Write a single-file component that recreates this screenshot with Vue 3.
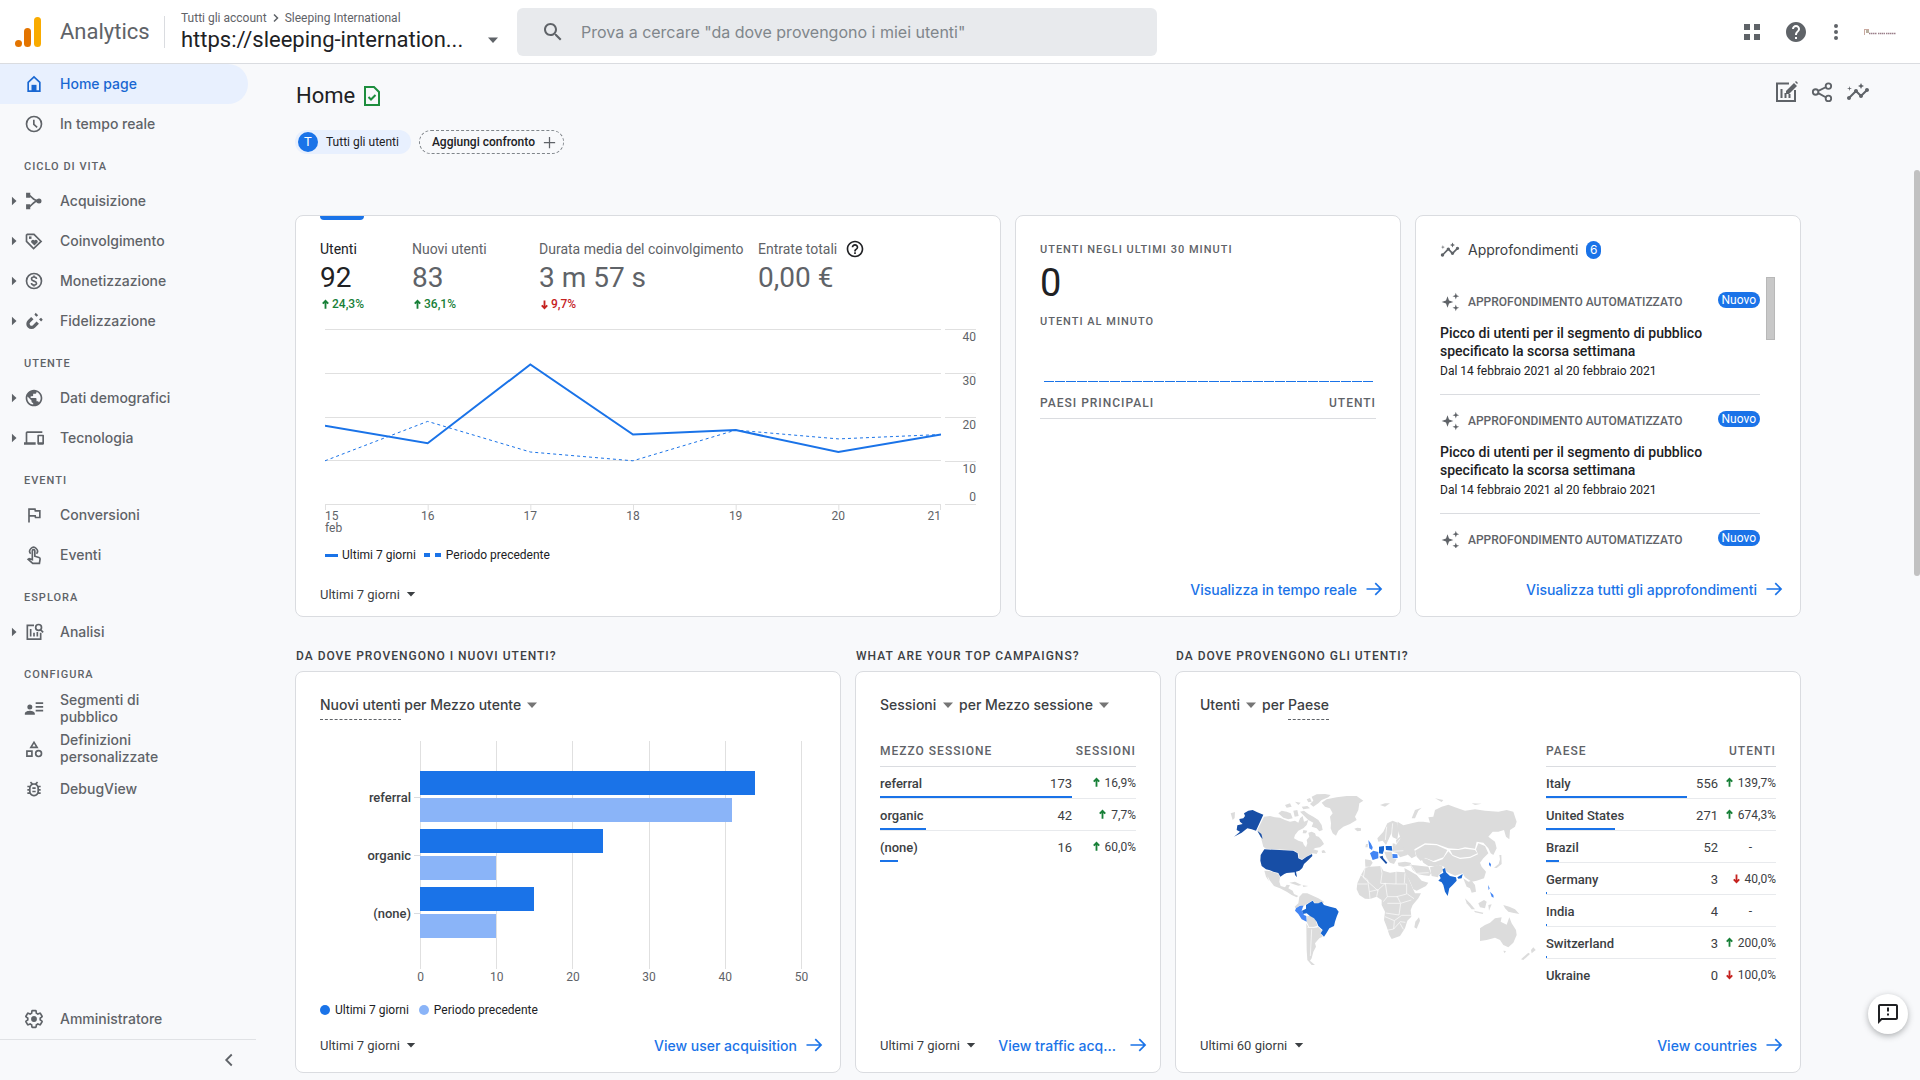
<script setup>
import { h } from 'vue'

/* Each icon is a list of [path data, stroke width]; a width of 0 means a filled path. */
const icons = {
  home: [['M5 10v10.5h14V10l-7-6.5z', 2], ['M9 13h6v8H9z', 0]],
  clock: [['M12 3a9 9 0 1 0 0 18a9 9 0 1 0 0-18M11.800 7v5.500l4 3.500', 2]],
  acquisition: [['M2.500 2h5v6h-5zM2.500 16h5v6h-5zM18 9a3 3 0 1 0 0 6a3 3 0 1 0 0-6', 0], ['M5 5c6 1 4 7 13 7M5 19c6-1 4-7 13-7', 2]],
  tag: [['M3 5v7.500l8.500 8.500 9-8.500L12 4H4z', 2], ['M6 6.500h3v3H6z', 0], ['M12.500 17.500l-4-4a2.300 2.300 0 0 1 4-2 2.300 2.300 0 0 1 4 2z', 0]],
  money: [['M12 3a9 9 0 1 0 0 18a9 9 0 1 0 0-18', 2], ['M15 9.500c0-3.200-6-3-6 0 0 3.500 6 1.800 6 5.200 0 3-6 3-6-.2M12 5.500v2M12 16.500v2', 2]],
  magnet: [['M10 8.500L6 12.500a4 4 0 0 0 6 6l4.500-4.500', 4], ['M14 2l3 3-2 2-2.500-2.500zM20.500 8l2 2.500-2 2-2.500-2.500z', 0]],
  globe: [['M12 2C6.480 2 2 6.480 2 12s4.480 10 10 10 10-4.480 10-10S17.520 2 12 2zm-1 17.930c-3.950-.49-7-3.850-7-7.930 0-.62.08-1.210.21-1.790L9 15v1c0 1.100.9 2 2 2v1.930zm6.900-2.540c-.26-.81-1-1.390-1.900-1.390h-1v-3c0-.55-.45-1-1-1H8v-2h2c.55 0 1-.45 1-1V7h2c1.100 0 2-.9 2-2v-.41c2.930 1.190 5 4.060 5 7.410 0 2.080-.8 3.970-2.100 5.390z', 0]],
  devices: [['M4 6h18V4H4c-1.100 0-2 .9-2 2v11H0v3h14v-3H4V6zm19 2h-6c-.55 0-1 .45-1 1v10c0 .55.45 1 1 1h6c.55 0 1-.45 1-1V9c0-.55-.45-1-1-1zm-1 9h-4v-7h4v7z', 0]],
  flag: [['M12.360 6l.4 2H18v6h-3.360l-.4-2H7V6h5.360M14 4H5v17h2v-7h5.600l.4 2h7V6h-5.600L14 4z', 0]],
  touch: [['M10 17.500V7a1.500 1.500 0 0 1 3 0v6.500l5 1.500c1 .3 1.500 1 1.300 2l-.8 5H10.500L5 17.300l1.200-.8z', 2], ['M8 10.500a4.600 4.600 0 1 1 7 0', 2]],
  analysis: [['M12 4H4v16.500h16V13', 2], ['M8 8.500v9M12 13v4.500M16 12v5.500', 2], ['M17.500 3a3.500 3.500 0 1 0 0 7a3.500 3.500 0 1 0 0-7M20 9.500l3 3', 2]],
  people: [['M7 6.500a3 3 0 1 0 0 6a3 3 0 1 0 0-6M1 19v-1.500c0-2.500 4-3.500 6-3.500s6 1 6 3.500V19zM14 4h9v2h-9zM14 8.500h9v2h-9zM14 13h9v2h-9z', 0]],
  shapes: [['M12 2l-5.500 9h11L12 2zm0 3.840L13.930 9h-3.870L12 5.840zM17.500 13a4.500 4.500 0 1 0 0 9 4.500 4.500 0 1 0 0-9zm0 7a2.500 2.500 0 0 1 0-5 2.500 2.500 0 0 1 0 5zM2.500 21.500h8v-8h-8v8zm2-6h4v4h-4v-4z', 0]],
  bug: [['M20 8h-2.810c-.45-.78-1.070-1.450-1.820-1.960L17 4.410 15.590 3l-2.170 2.170C12.960 5.060 12.490 5 12 5s-.96.06-1.410.17L8.410 3 7 4.410l1.620 1.630C7.880 6.550 7.260 7.220 6.810 8H4v2h2.090c-.05.33-.09.66-.09 1v1H4v2h2v1c0 .34.04.67.09 1H4v2h2.810c1.040 1.790 2.970 3 5.190 3s4.150-1.210 5.190-3H20v-2h-2.090c.05-.33.09-.66.09-1v-1h2v-2h-2v-1c0-.34-.04-.67-.09-1H20V8zm-4 7c0 2.200-1.800 4-4 4s-4-1.800-4-4v-4c0-2.200 1.800-4 4-4s4 1.800 4 4v4zm-6-1h4v2h-4v-2zm0-4h4v2h-4v-2z', 0]],
  gear: [['M19.430 12.980c.04-.32.07-.64.07-.98s-.03-.66-.07-.98l2.110-1.650c.19-.15.24-.42.12-.64l-2-3.460c-.09-.16-.26-.25-.44-.25-.06 0-.12.01-.17.03l-2.490 1c-.52-.4-1.080-.73-1.690-.98l-.38-2.650C14.460 2.180 14.250 2 14 2h-4c-.25 0-.46.18-.49.42l-.38 2.650c-.61.25-1.170.59-1.690.98l-2.490-1c-.06-.02-.12-.03-.18-.03-.17 0-.34.09-.43.25l-2 3.460c-.13.22-.07.49.12.64l2.110 1.650c-.04.32-.07.65-.07.98s.03.66.07.98l-2.110 1.650c-.19.15-.24.42-.12.64l2 3.460c.09.16.26.25.44.25.06 0 .12-.01.17-.03l2.490-1c.52.4 1.080.73 1.690.98l.38 2.650c.03.24.24.42.49.42h4c.25 0 .46-.18.49-.42l.38-2.650c.61-.25 1.170-.59 1.690-.98l2.490 1c.06.02.12.03.18.03.17 0 .34-.09.43-.25l2-3.460c.12-.22.07-.49-.12-.64z', 2], ['M12 8.500a3.500 3.500 0 1 0 0 7a3.500 3.500 0 1 0 0-7', 0]],
  chevronLeft: [['M15 6l-6 6 6 6', 2]],
  search: [['M15.500 14h-.79l-.28-.27C15.410 12.590 16 11.110 16 9.500 16 5.910 13.090 3 9.500 3S3 5.910 3 9.500 5.910 16 9.500 16c1.610 0 3.090-.59 4.230-1.570l.27.28v.79l5 4.990L20.490 19l-4.990-5zm-6 0C7.010 14 5 11.990 5 9.500S7.010 5 9.500 5 14 7.010 14 9.500 11.990 14 9.500 14z', 0]],
  apps: [['M4 4h6v6H4zM14 4h6v6h-6zM4 14h6v6H4zM14 14h6v6h-6z', 0]],
  help: [['M12 2C6.480 2 2 6.480 2 12s4.480 10 10 10 10-4.480 10-10S17.520 2 12 2zm1 17h-2v-2h2v2zm2.070-7.750l-.9.92C13.450 12.900 13 13.500 13 15h-2v-.5c0-1.100.45-2.100 1.170-2.830l1.240-1.260c.37-.36.59-.86.59-1.410 0-1.100-.9-2-2-2s-2 .9-2 2H8c0-2.210 1.790-4 4-4s4 1.790 4 4c0 .88-.36 1.680-.93 2.250z', 0]],
  helpOutline: [['M11 18h2v-2h-2v2zm1-16C6.480 2 2 6.480 2 12s4.480 10 10 10 10-4.480 10-10S17.520 2 12 2zm0 18c-4.410 0-8-3.590-8-8s3.590-8 8-8 8 3.590 8 8-3.590 8-8 8zm0-14c-2.210 0-4 1.790-4 4h2c0-1.100.9-2 2-2s2 .9 2 2c0 2-3 1.750-3 5h2c0-2.250 3-2.500 3-5 0-2.210-1.790-4-4-4z', 0]],
  more: [['M12 4a2 2 0 1 0 0 4a2 2 0 1 0 0-4M12 10a2 2 0 1 0 0 4a2 2 0 1 0 0-4M12 16a2 2 0 1 0 0 4a2 2 0 1 0 0-4', 0]],
  editChart: [['M15 3.500H3v17.500h18V10', 2], ['M7.500 9v9M11.500 13v5M15.500 14v4', 2], ['M12 14v-3l8-8 3 3-8 8zM21 2l1-1 2 2-1 1z', 0]],
  share: [['M19 2.500a3 3 0 1 0 0 6a3 3 0 1 0 0-6M5 9a3 3 0 1 0 0 6a3 3 0 1 0 0-6M19 16a3 3 0 1 0 0 6a3 3 0 1 0 0-6M8 10.800l8-4M8 13.200l8 4.500', 2]],
  insights: [['M21 8c-1.450 0-2.260 1.440-1.930 2.510l-3.550 3.560c-.3-.09-.74-.09-1.040 0l-2.550-2.550C12.270 10.450 11.460 9 10 9c-1.450 0-2.270 1.440-1.930 2.520l-4.560 4.550C2.440 15.740 1 16.550 1 18c0 1.100.9 2 2 2 1.450 0 2.260-1.440 1.930-2.510l4.550-4.560c.3.09.74.09 1.040 0l2.550 2.550C12.730 16.550 13.540 18 15 18c1.450 0 2.270-1.440 1.930-2.520l3.560-3.550C21.560 12.260 23 11.450 23 10c0-1.100-.9-2-2-2zM15 9l.94-2.070L18 6l-2.060-.93L15 3l-.92 2.070L12 6l2.080.93zM3.500 11L4 9l2-.5L4 8l-.5-2L3 8l-2 .5L3 9z', 0]],
  sparkles: [['M9 5l1.800 5.200L16 12l-5.200 1.800L9 19l-1.800-5.200L2 12l5.200-1.800zM19 1l1 3 3 1-3 1-1 3-1-3-3-1 3-1zM19 15l1 3 3 1-3 1-1 3-1-3-3-1 3-1z', 0]],
  report: [['M14 3H5v18h14V8z', 2], ['M8.500 13l2.500 2.500 4.500-4.500', 2]],
  plus: [['M12 3v18M3 12h18', 2]],
  arrow: [['M3 12h17M13.500 5l7 7-7 7', 2]],
  up: [['M12 4v17M6 10l6-6 6 6', 4]],
  down: [['M12 3v17M6 14l6 6 6-6', 4]],
  caret: [['M2 7h20L12 18z', 0]],
  caretRight: [['M7 2v20l11-10z', 0]],
  chevronRight: [['M8 5l7 7-7 7', 3]],
  feedback: [['M20 2H4c-1.100 0-1.990.9-1.990 2L2 22l4-4h14c1.100 0 2-.9 2-2V4c0-1.100-.9-2-2-2zm0 14H5.170L4 17.170V4h16v12zM11 5.500h2v4h-2zM11 11.500h2v2h-2z', 0]],
}

const Icon = (props) =>
  h(
    'svg',
    { viewBox: '0 0 24 24', width: props.size, height: props.size, 'aria-hidden': 'true' },
    icons[props.name].map(([d, w]) =>
      w
        ? h('path', { d, fill: 'none', stroke: 'currentColor', 'stroke-width': w })
        : h('path', { d, fill: 'currentColor' }),
    ),
  )
Icon.props = ['name', 'size']

const navGroups = [
  {
    title: '',
    items: [
      { label: 'Home page', icon: 'home', active: true },
      { label: 'In tempo reale', icon: 'clock' },
    ],
  },
  {
    title: 'CICLO DI VITA',
    items: [
      { label: 'Acquisizione', icon: 'acquisition', expandable: true },
      { label: 'Coinvolgimento', icon: 'tag', expandable: true },
      { label: 'Monetizzazione', icon: 'money', expandable: true },
      { label: 'Fidelizzazione', icon: 'magnet', expandable: true },
    ],
  },
  {
    title: 'UTENTE',
    items: [
      { label: 'Dati demografici', icon: 'globe', expandable: true },
      { label: 'Tecnologia', icon: 'devices', expandable: true },
    ],
  },
  {
    title: 'EVENTI',
    items: [
      { label: 'Conversioni', icon: 'flag' },
      { label: 'Eventi', icon: 'touch' },
    ],
  },
  { title: 'ESPLORA', items: [{ label: 'Analisi', icon: 'analysis', expandable: true }] },
  {
    title: 'CONFIGURA',
    items: [
      { label: 'Segmenti di pubblico', icon: 'people' },
      { label: 'Definizioni personalizzate', icon: 'shapes' },
      { label: 'DebugView', icon: 'bug' },
    ],
  },
]

const metrics = [
  { label: 'Utenti', value: '92', change: '24,3%', dir: 'up', active: true },
  { label: 'Nuovi utenti', value: '83', change: '36,1%', dir: 'up' },
  { label: 'Durata media del coinvolgimento', value: '3 m 57 s', change: '9,7%', dir: 'down' },
  { label: 'Entrate totali', value: '0,00 €', help: true },
]

/* Line chart: 616 x 175 plot, y range 0-40 */
const current = [18, 14, 32, 16, 17, 12, 16]
const previous = [10, 19, 12, 10, 17, 15, 16]
const toPoints = (series) =>
  series.map((v, i) => `${(i * 616) / 6},${(175.5 - v * 4.375).toFixed(1)}`).join(' ')
const gridLines = [0.5, 44.5, 88.5, 131.5, 175.5]
const days = ['15', '16', '17', '18', '19', '20', '21']

const insights = [
  {
    title: 'Picco di utenti per il segmento di pubblico specificato la scorsa settimana',
    range: 'Dal 14 febbraio 2021 al 20 febbraio 2021',
  },
  {
    title: 'Picco di utenti per il segmento di pubblico specificato la scorsa settimana',
    range: 'Dal 14 febbraio 2021 al 20 febbraio 2021',
  },
  {},
]

const media = [
  { label: 'referral', now: 44, before: 41 },
  { label: 'organic', now: 24, before: 10 },
  { label: '(none)', now: 15, before: 10 },
]
const mediaTicks = [0, 10, 20, 30, 40, 50]

const campaigns = [
  { label: 'referral', value: 173, change: '16,9%', dir: 'up', bar: 75 },
  { label: 'organic', value: 42, change: '7,7%', dir: 'up', bar: 18 },
  { label: '(none)', value: 16, change: '60,0%', dir: 'up', bar: 7 },
]

const countries = [
  { label: 'Italy', value: 556, change: '139,7%', dir: 'up', bar: 61.4 },
  { label: 'United States', value: 271, change: '674,3%', dir: 'up', bar: 30 },
  { label: 'Brazil', value: 52, change: '-', bar: 5.7 },
  { label: 'Germany', value: 3, change: '40,0%', dir: 'down', bar: 0.4 },
  { label: 'India', value: 4, change: '-', bar: 0.4 },
  { label: 'Switzerland', value: 3, change: '200,0%', dir: 'up', bar: 0.4 },
  { label: 'Ukraine', value: 0, change: '100,0%', dir: 'down', bar: 0 },
]

/* World map, one entry per landmass */
const land = [
  '282,530 300,528 315,532 330,533 345,540 360,545 375,542 385,548 390,535 398,528 402,545 415,540 410,555 400,565 385,572 375,585 372,595 385,602 398,606 402,615 408,622 412,610 410,600 418,590 415,578 425,575 435,580 438,588 446,590 455,600 462,612 450,622 436,624 430,628 445,632 440,642 428,640 412,648 396,658 387,654 385,640 372,631 288,626 280,620 276,605 272,590 262,570',
  '325,520 335,512 350,515 362,520 368,535 355,538 340,533',
  '390,515 402,512 415,522 430,530 445,540 455,555 458,570 448,574 440,565 425,560 430,548 415,540 405,530',
  '425,470 440,463 465,462 482,465 475,472 455,480 445,490 430,500 420,492 430,482',
  '345,495 360,490 365,500 350,503', '375,485 392,488 385,495', '395,500 412,498 420,505 400,508',
  '410,478 420,474 425,485 415,487', '370,512 382,510 386,528 374,530', '400,570 412,572 408,580 398,580',
  '455,488 470,478 500,472 530,468 560,468 580,482 568,490 565,510 555,530 560,540 540,552 520,560 505,572 498,587 488,580 482,565 483,550 480,530 488,520 480,505 465,500',
  '553,566 562,563 573,565 573,572 562,574',
  '455,632 462,630 468,638 456,639',
  '283,692 300,693 310,697 325,701 330,712 328,725 332,738 345,742 350,734 360,736 355,745 368,752 372,762 385,768 380,772 365,765 350,755 330,745 312,738 300,722 292,708 297,724 288,710',
  '358,728 375,725 395,735 385,737', '398,736 415,738 400,741',
  '388,770 398,760 412,760 430,768 445,775 462,785 458,792 445,789 433,788 428,781 418,787 406,794 400,800 390,796 378,806 374,800 385,790',
  '412,828 425,828 436,838 442,858 428,862 418,862 410,845',
  '409,850 416,863 430,863 444,860 456,872 452,880 458,890 448,895 435,910 438,920 430,935 425,955 420,962 435,975 425,975 412,960 410,930',
  '585,683 600,680 632,678 640,692 660,698 680,695 705,697 715,715 728,745 735,760 753,760 745,775 728,795 722,810 724,830 712,842 705,865 690,888 665,897 658,885 650,860 642,840 645,815 635,795 635,780 620,770 600,777 585,776 568,765 560,748 562,730 573,705',
  '747,832 750,842 740,866 733,862 736,845',
  '683,668 705,665 722,668 725,676 700,680 686,678',
  '703,684 718,692 740,705 755,722 775,728 768,738 740,752 730,748 718,720 706,702',
  '720,674 735,676 755,678 775,680 783,700 778,708 760,706 742,702 728,690',
  '780,682 805,675 816,678 820,692 806,704 804,712 785,708',
  '752,652 770,656 790,666 812,668 814,676 795,678 775,678 760,668',
  '683,545 700,556 725,550 745,545 760,545 780,548 775,532 790,530 795,510 815,500 835,494 855,502 885,512 915,508 945,512 985,515 1010,510 1030,515 1040,545 1035,560 1020,570 1018,598 1008,590 1002,570 985,575 968,575 955,590 975,605 980,625 970,645 962,640 955,625 940,608 920,605 915,626 885,622 865,627 835,625 800,612 765,610 733,628 738,648 725,655 715,645 690,630 680,615 678,600 690,590 683,570',
  '735,632 765,614 800,616 832,630 820,652 790,663 765,653 752,663 740,650',
  '840,630 865,630 885,626 915,630 922,640 900,650 870,653 848,645',
  '790,668 818,658 835,634 848,648 870,657 900,654 924,643 918,628 925,610 945,618 955,640 940,655 930,668 935,680 948,695 942,715 920,722 905,725 885,712 878,700 855,707 830,695 822,680',
  '972,683 986,672 990,658 988,645 994,645 995,672 980,684',
  '880,715 895,725 905,722 915,735 918,755 905,758 900,745 890,740 885,728',
  '885,775 900,790 915,808 905,808 890,790', '925,790 942,780 950,785 945,805 930,802', '912,812 940,818 938,822 915,817',
  '955,795 965,793 960,805 957,812', '1000,795 1018,800 1035,808 1048,822 1028,818 1015,815 1005,805',
  '930,865 945,855 960,848 975,835 995,832 992,845 1010,854 1018,832 1025,850 1038,870 1040,885 1030,908 1015,922 1000,915 990,900 975,893 950,900 930,903',
  '1000,932 1008,933 1004,940', '1053,958 1075,938 1080,942 1060,960', '1083,930 1090,922 1097,930 1085,940',
  '622,595 640,575 652,550 668,542 683,548 685,580 682,598 668,592 664,580 655,600 648,615 638,602 625,605',
  '585,658 603,661 608,668 600,680 586,680', '588,612 594,612 593,622 586,622',
  '643,635 665,635 668,656 680,658 672,672 660,668 650,655', '668,610 690,615 715,632 712,645 690,652 682,640 668,635',
  '630,495 645,490 660,490 645,500', '725,535 735,510 755,503 745,512 735,535', '795,475 820,480 815,486', '905,490 935,491 915,495',
  '182,520 195,516 194,534 188,540',
]
const borders =
  'M585 683l-5 30 45 40M632 678l4 22-4 30 48 2M678 696v36M573 705l20 15 5 35M562 732h30M600 777l-2-22 26-6M620 770l4-20 22-20M646 730l6 40 30 0M680 732l30 0 0 30-30 8M652 770l-12 15M682 770l10 20-5 35-40-6M692 790l32-10M645 830l28 12 22-16 28 0M673 842l-2 25-20 4M671 867l20-22 15 2M705 700l-2 30M690 850l10 18M652 790l38 0M712 762l20 14M720 672l20 30M740 700l36-2M412 862h30M425 868l-4 80M700 632l-30 2M690 596l-14 20M668 550l-4 40M650 560l-4 40'
</script>

<template>
  <div class="app">
    <header class="topbar">
      <svg class="logo" viewBox="0 0 26 30" width="26" height="30" aria-hidden="true">
        <rect x="19" width="7" height="30" rx="3.500" fill="#f9ab00" />
        <rect x="9" y="11" width="7" height="19" rx="3.500" fill="#e37400" />
        <circle cx="3.500" cy="26.500" r="3.500" fill="#e37400" />
      </svg>
      <span class="product">Analytics</span>
      <div class="property">
        <nav class="crumbs" aria-label="Account">
          <a href="#">Tutti gli account</a>
          <Icon name="chevronRight" size="12" />
          <a href="#">Sleeping International</a>
        </nav>
        <button class="property-name" type="button">
          <span>https://sleeping-internation...</span>
          <Icon name="caret" size="12" />
        </button>
      </div>
      <label class="search">
        <Icon name="search" size="24" />
        <input type="search" placeholder='Prova a cercare "da dove provengono i miei utenti"' aria-label="Cerca" />
      </label>
      <div class="top-actions">
        <button type="button" aria-label="App"><Icon name="apps" size="24" /></button>
        <button type="button" aria-label="Guida"><Icon name="help" size="24" /></button>
        <button type="button" aria-label="Altro"><Icon name="more" size="24" /></button>
        <svg class="avatar" viewBox="0 0 32 8" width="32" height="8" aria-hidden="true">
          <path d="M0 1h5v1H1v5H0z" fill="#c9a9a0" />
          <path d="M2 2h3v3H2z" fill="#b9b0a0" />
          <path d="M5 5.500h8M14 5.500h7M22 5.500h10" stroke="#9b7f8a" stroke-width="1.500" stroke-dasharray="1.500 .5" />
        </svg>
      </div>
    </header>

    <div class="body">
      <aside class="sidebar">
        <nav aria-label="Menu principale">
          <section v-for="group in navGroups" :key="group.title">
            <h2 v-if="group.title" class="nav-title">{{ group.title }}</h2>
            <a
              v-for="item in group.items"
              :key="item.label"
              href="#"
              class="nav-item"
              :class="{ active: item.active }"
            >
              <span class="expander"><Icon v-if="item.expandable" name="caretRight" size="10" /></span>
              <Icon :name="item.icon" size="20" />
              <span class="nav-label">{{ item.label }}</span>
            </a>
          </section>
        </nav>
        <div class="sidebar-foot">
          <a href="#" class="nav-item">
            <span class="expander"></span>
            <Icon name="gear" size="20" />
            <span class="nav-label">Amministratore</span>
          </a>
          <div class="collapse">
            <button type="button" aria-label="Comprimi menu"><Icon name="chevronLeft" size="22" /></button>
          </div>
        </div>
      </aside>

      <main class="main">
        <div class="page-head">
          <h1>Home</h1>
          <Icon class="verified" name="report" size="24" />
          <div class="page-actions">
            <button type="button" aria-label="Personalizza"><Icon name="editChart" size="24" /></button>
            <button type="button" aria-label="Condividi"><Icon name="share" size="22" /></button>
            <button type="button" aria-label="Approfondimenti"><Icon name="insights" size="24" /></button>
          </div>
        </div>

        <div class="chips">
          <button type="button" class="chip"><span class="chip-dot">T</span>Tutti gli utenti</button>
          <button type="button" class="chip chip-add">Aggiungi confronto <Icon name="plus" size="15" /></button>
        </div>

        <div class="row row-top">
          <section class="card">
            <div class="metrics">
              <button v-for="m in metrics" :key="m.label" type="button" class="metric" :class="{ active: m.active }">
                <span class="metric-label">{{ m.label }}<Icon v-if="m.help" name="helpOutline" size="20" /></span>
                <span class="metric-value">{{ m.value }}</span>
                <span v-if="m.change" class="metric-change" :class="m.dir"><Icon :name="m.dir" size="11" />{{ m.change }}</span>
              </button>
            </div>
            <div class="line-chart">
              <div class="plot">
                <svg viewBox="0 0 616 181" preserveAspectRatio="none" aria-hidden="true">
                  <path v-for="y in gridLines" :key="y" :d="`M0 ${y}H616`" class="grid" />
                  <path v-for="(d, i) in days" :key="d" :d="`M${i === 6 ? 615.5 : (i * 616) / 6 + 0.5} 176v5`" class="grid" />
                  <polyline :points="toPoints(previous)" class="series previous" />
                  <polyline :points="toPoints(current)" class="series" />
                </svg>
                <div class="days"><span v-for="d in days" :key="d">{{ d }}<template v-if="d === '15'"><br />feb</template></span></div>
              </div>
              <div class="y-axis">
                <div>40</div>
                <div>30</div>
                <div>20</div>
                <div><span>10</span><span>0</span></div>
              </div>
            </div>
            <div class="legend legend-line">
              <i class="key-solid"></i><span>Ultimi 7 giorni</span>
              <i class="key-dash"></i><span>Periodo precedente</span>
            </div>
            <footer class="card-foot low">
              <label class="picker"><select aria-label="Periodo"><option>Ultimi 7 giorni</option></select><Icon name="caret" size="10" /></label>
            </footer>
          </section>

          <section class="card">
            <h3 class="caps first">UTENTI NEGLI ULTIMI 30 MINUTI</h3>
            <p class="big-number">0</p>
            <h3 class="caps second">UTENTI AL MINUTO</h3>
            <div class="spark"><i v-for="n in 30" :key="n"></i></div>
            <table class="caps-table">
              <thead><tr><th>PAESI PRINCIPALI</th><th class="end">UTENTI</th></tr></thead>
            </table>
            <footer class="card-foot">
              <a href="#" class="more">Visualizza in tempo reale<Icon name="arrow" size="20" /></a>
            </footer>
          </section>

          <section class="card">
            <h3 class="insights-title"><Icon name="insights" size="20" />Approfondimenti<span class="count">6</span></h3>
            <div class="insights">
              <ul>
                <li v-for="(item, i) in insights" :key="i">
                  <div class="insight-head">
                    <Icon name="sparkles" size="20" />
                    <span>APPROFONDIMENTO AUTOMATIZZATO</span>
                    <b>Nuovo</b>
                  </div>
                  <a v-if="item.title" href="#" class="insight-title">{{ item.title }}</a>
                  <p v-if="item.range">{{ item.range }}</p>
                </li>
              </ul>
              <i class="thumb"></i>
            </div>
            <footer class="card-foot">
              <a href="#" class="more">Visualizza tutti gli approfondimenti<Icon name="arrow" size="20" /></a>
            </footer>
          </section>
        </div>

        <div class="row row-bottom">
          <div class="column">
            <h2>DA DOVE PROVENGONO I NUOVI UTENTI?</h2>
            <section class="card">
              <div class="card-title">
                <span class="dotted">Nuovi utenti</span>&nbsp;<label class="picker"><select aria-label="Dimensione"><option>per Mezzo utente</option></select><Icon name="caret" size="12" /></label>
              </div>
              <div class="bar-chart">
                <div class="bar-grid">
                  <span v-for="t in mediaTicks" :key="t" :style="{ left: t * 2 + '%' }"><em>{{ t }}</em></span>
                </div>
                <div v-for="m in media" :key="m.label" class="bar-row">
                  <span class="bar-label">{{ m.label }}</span>
                  <div class="bars">
                    <i :style="{ width: m.now * 2 + '%' }"></i>
                    <i class="before" :style="{ width: m.before * 2 + '%' }"></i>
                  </div>
                </div>
              </div>
              <div class="legend legend-dots">
                <i class="key-dot"></i><span>Ultimi 7 giorni</span>
                <i class="key-dot before"></i><span>Periodo precedente</span>
              </div>
              <footer class="card-foot">
                <label class="picker"><select aria-label="Periodo"><option>Ultimi 7 giorni</option></select><Icon name="caret" size="10" /></label>
                <a href="#" class="more">View user acquisition<Icon name="arrow" size="20" /></a>
              </footer>
            </section>
          </div>

          <div class="column">
            <h2>WHAT ARE YOUR TOP CAMPAIGNS?</h2>
            <section class="card">
              <div class="card-title">
                <label class="picker"><select aria-label="Metrica"><option>Sessioni</option></select><Icon name="caret" size="12" /></label>
                <label class="picker next"><select aria-label="Dimensione"><option>per Mezzo sessione</option></select><Icon name="caret" size="12" /></label>
              </div>
              <table class="data">
                <thead><tr><th colspan="2">MEZZO SESSIONE</th><th class="end">SESSIONI</th></tr></thead>
                <tbody>
                  <tr v-for="r in campaigns" :key="r.label">
                    <td class="name">{{ r.label }}<i v-if="r.bar" class="share" :style="{ width: r.bar + '%' }"></i></td>
                    <td class="value">{{ r.value }}</td>
                    <td class="change"><Icon :name="r.dir" size="11" :class="r.dir" />{{ r.change }}</td>
                  </tr>
                </tbody>
              </table>
              <footer class="card-foot">
                <label class="picker"><select aria-label="Periodo"><option>Ultimi 7 giorni</option></select><Icon name="caret" size="10" /></label>
                <a href="#" class="more clipped">View traffic acq...<Icon name="arrow" size="20" /></a>
              </footer>
            </section>
          </div>

          <div class="column">
            <h2>DA DOVE PROVENGONO GLI UTENTI?</h2>
            <section class="card">
              <div class="card-title">
                <label class="picker"><select aria-label="Metrica"><option>Utenti</option></select><Icon name="caret" size="12" /></label>
                <span class="next">per&nbsp;</span><span class="dotted">Paese</span>
              </div>
              <div class="geo">
                <svg class="map" viewBox="90 420 1038 600" role="img" aria-label="Utenti per paese">
                  <polygon v-for="(p, i) in land" :key="i" :points="p" class="land" />
                  <path :d="borders" class="borders" />
                  <g fill="#174ea6">
                    <polygon points="283,628 370,632 383,640 385,655 396,660 410,650 426,642 427,648 415,660 402,672 397,684 388,692 378,695 381,712 375,705 374,697 350,699 343,702 331,710 325,699 310,695 300,691 288,688 275,678 271,662 272,645" />
                    <polygon points="222,520 235,512 248,510 262,517 280,524 258,572 245,568 232,565 215,578 192,590 210,575 200,570 202,556 218,552 210,545 208,537 220,535 225,528" />
                    <polygon points="262,572 274,582 278,597 272,590" />
                    <polygon points="628,650 638,647 640,655 652,668 648,672 635,658" />
                  </g>
                  <g fill="#1967d2">
                    <polygon points="408,795 418,788 428,782 433,790 445,790 455,785 462,795 480,800 498,805 506,815 500,830 495,845 492,858 478,865 470,878 462,890 452,880 458,870 445,858 440,845 432,835 420,828 410,820 398,822 396,812 408,806" />
                    <polygon points="818,688 825,684 828,697 840,708 858,712 860,722 848,735 838,745 833,768 825,755 820,735 815,727 805,722 812,715 808,705 820,698" />
                    <polygon points="862,712 878,702 875,715 865,716" />
                    <polygon points="627,620 642,618 642,630 638,642 627,640" />
                    <polygon points="647,618 665,618 667,632 648,630" />
                  </g>
                  <g fill="#4285f4">
                    <polygon points="378,805 390,797 400,797 395,812 402,825 409,828 410,845 395,838 385,822 375,812" />
                    <polygon points="600,640 610,632 625,636 625,655 608,660" />
                    <polygon points="595,600 602,610 608,622 606,630 598,625" />
                    <polygon points="667,642 682,643 683,654 668,655" />
                    <polygon points="957,667 963,672 962,680 957,675" />
                    <polygon points="954,735 959,745 956,750" />
                    <polygon points="960,755 970,765 971,773 965,770" />
                  </g>
                </svg>
                <table class="data">
                  <thead><tr><th>PAESE</th><th colspan="2" class="end">UTENTI</th></tr></thead>
                  <tbody>
                    <tr v-for="r in countries" :key="r.label">
                      <td class="name">{{ r.label }}<i v-if="r.bar" class="share" :style="{ width: r.bar + '%' }"></i></td>
                      <td class="value">{{ r.value }}</td>
                      <td class="change" :class="{ none: !r.dir }"><Icon v-if="r.dir" :name="r.dir" size="11" :class="r.dir" />{{ r.change }}</td>
                    </tr>
                  </tbody>
                </table>
              </div>
              <footer class="card-foot">
                <label class="picker"><select aria-label="Periodo"><option>Ultimi 60 giorni</option></select><Icon name="caret" size="10" /></label>
                <a href="#" class="more">View countries<Icon name="arrow" size="20" /></a>
              </footer>
            </section>
          </div>
        </div>
      </main>
    </div>

    <i class="page-thumb"></i>
    <button type="button" class="fab" aria-label="Invia feedback"><Icon name="feedback" size="24" /></button>
  </div>
</template>

<style>
body {
  background: #f8f9fb;
}
</style>

<style scoped>
.app {
  --sans: Inter, Roboto, sans-serif;
  --text: Roboto, sans-serif;
  display: flex;
  flex-direction: column;
  min-height: 100vh;
  font-family: var(--text);
  font-size: 12px;
  color: #3c4043;
}
.app *,
.app *::before {
  box-sizing: border-box;
}
h1, h2, h3, p, ul {
  margin: 0;
  padding: 0;
  font-weight: 400;
}
button, select, input {
  margin: 0;
  padding: 0;
  border: 0;
  background: none;
  font: inherit;
  color: inherit;
}
a {
  color: inherit;
  text-decoration: none;
}
svg {
  display: block;
  flex: none;
}

/* Top bar */
.topbar {
  display: flex;
  align-items: center;
  height: 64px;
  padding: 0 24px 0 15px;
  background: #fff;
  border-bottom: 1px solid #dadce0;
}
.product {
  margin-left: 19px;
  padding-right: 16px;
  width: 105px;
  border-right: 1px solid #dadce0;
  font-size: 22px;
  line-height: 32px;
  color: #5f6368;
}
.property {
  margin-left: 16px;
  width: 336px;
}
.crumbs {
  display: flex;
  align-items: center;
  gap: 3px;
  font-size: 12px;
  line-height: 16px;
  color: #5f6368;
}
.property-name {
  display: flex;
  align-items: center;
  justify-content: space-between;
  width: 318px;
  font-size: 22px;
  line-height: 28px;
  color: #202124;
}
.property-name svg {
  color: #5f6368;
}
.search {
  display: flex;
  align-items: center;
  flex: 0 1 640px;
  height: 48px;
  padding-left: 24px;
  gap: 16px;
  border-radius: 6px;
  background: #e8eaed;
  color: #5f6368;
}
.search input {
  flex: 1;
  font-family: var(--sans);
  font-size: 16px;
  outline: 0;
}
.search input::placeholder {
  color: #80868b;
  opacity: 1;
}
.top-actions {
  display: flex;
  align-items: center;
  gap: 16px;
  margin-left: auto;
  color: #5f6368;
}
.top-actions button:first-child {
  margin-right: 4px;
}

/* Sidebar */
.body {
  display: flex;
  flex: 1;
}
.sidebar {
  display: flex;
  flex-direction: column;
  justify-content: space-between;
  flex: 0 0 256px;
  font-family: var(--sans);
  color: #5f6368;
}
.nav-title {
  padding: 15px 0 6px 24px;
  font-family: var(--text);
  font-size: 11px;
  font-weight: 500;
  letter-spacing: 1px;
  line-height: 16px;
}
.nav-item {
  display: flex;
  align-items: center;
  height: 40px;
  margin-right: 8px;
  font-size: 14px;
  font-weight: 500;
  line-height: 17px;
}
.expander {
  width: 24px;
  padding-left: 9px;
}
.nav-label {
  width: 120px;
  margin-left: 16px;
  padding-bottom: 2px;
  white-space: normal;
}
.nav-item.active {
  border-radius: 0 20px 20px 0;
  background: #e8f0fe;
  color: #1967d2;
}
.collapse {
  display: flex;
  justify-content: flex-end;
  height: 41px;
  padding: 0 16px;
  border-top: 1px solid #e0e2e5;
}

/* Page heading */
.main {
  flex: 1;
  min-width: 0;
  padding: 0 119px 7px 39px;
}
.page-head {
  display: flex;
  align-items: center;
  height: 32px;
  margin-top: 16px;
  padding-left: 1px;
}
.page-head h1 {
  font-size: 22px;
  line-height: 32px;
  color: #202124;
}
.verified {
  margin-left: 5px;
  color: #1e8e3e;
}
.page-actions {
  display: flex;
  align-items: center;
  align-self: flex-start;
  gap: 13px;
  margin-left: auto;
  margin-right: -69px;
  color: #5f6368;
}
.chips {
  display: flex;
  gap: 8px;
  margin-top: 18px;
}
.chip {
  display: flex;
  align-items: center;
  height: 24px;
  padding: 0 12px 0 3px;
  gap: 8px;
  border-radius: 12px;
  background: #e8f0fe;
  font-size: 12px;
  color: #202124;
}
.chip-dot {
  width: 20px;
  border-radius: 10px;
  background: #1a73e8;
  font-size: 13px;
  line-height: 20px;
  color: #fff;
}
.chip-add {
  padding: 0 6px 0 12px;
  gap: 7px;
  border: 1px dashed #80868b;
  background: none;
  font-weight: 500;
}
.chip-add svg {
  color: #5f6368;
}

/* Cards */
.row {
  display: grid;
  gap: 14px;
}
.row-top {
  grid-template-columns: 706fr 386fr 386fr;
  margin-top: 61px;
}
.row-bottom {
  grid-template-columns: 546fr 306fr 626fr;
  margin-top: 31px;
}
.column {
  display: flex;
  flex-direction: column;
  min-width: 0;
}
.column h2 {
  margin-bottom: 7px;
  padding-left: 1px;
  font-size: 12px;
  font-weight: 500;
  letter-spacing: 1px;
  line-height: 16px;
  white-space: nowrap;
}
.card {
  display: flex;
  flex: 1;
  flex-direction: column;
  min-width: 0;
  min-height: 402px;
  padding: 0 24px;
  border: 1px solid #dadce0;
  border-radius: 8px;
  background: #fff;
}
.card-foot {
  display: flex;
  align-items: center;
  justify-content: space-between;
  height: 54px;
  margin-top: auto;
}
.card-foot.low {
  height: 44px;
}
.picker {
  display: inline-flex;
  align-items: center;
  gap: 6px;
}
.picker select {
  appearance: none;
}
.card-foot .picker {
  font-size: 13px;
}
.more {
  display: flex;
  align-items: center;
  gap: 7px;
  margin-left: auto;
  margin-right: -8px;
  font-family: var(--sans);
  font-size: 14px;
  font-weight: 500;
  white-space: nowrap;
  color: #1a73e8;
}
.more.clipped {
  gap: 12px;
  margin-right: -12px;
}

/* Metrics and line chart */
.metrics {
  display: grid;
  grid-template-columns: 92px 127px 219px 1fr;
}
.metric {
  position: relative;
  display: flex;
  flex-direction: column;
  align-items: flex-start;
  padding-top: 23px;
  white-space: nowrap;
  color: #5f6368;
}
.metric.active {
  color: #202124;
}
.metric.active::before {
  content: '';
  position: absolute;
  top: 0;
  left: 0;
  width: 44px;
  height: 4px;
  border-radius: 0 0 4px 4px;
  background: #1a73e8;
}
.metric-label {
  display: flex;
  align-items: center;
  gap: 8px;
  font-size: 14px;
  line-height: 20px;
}
.metric-label svg {
  color: #202124;
}
.metric-value {
  font-size: 28px;
  line-height: 38px;
}
.metric-change {
  display: flex;
  align-items: center;
  gap: 1px;
  font-weight: 500;
  line-height: 14px;
}
.up {
  color: #188038;
}
.down {
  color: #c5221f;
}
.line-chart {
  display: flex;
  gap: 4px;
  margin: 18px 0 0 5px;
  color: #5f6368;
}
.plot {
  flex: 1;
}
.plot svg {
  width: 100%;
  height: 181px;
}
.grid {
  stroke: #e0e0e0;
  vector-effect: non-scaling-stroke;
}
.series {
  fill: none;
  stroke: #1a73e8;
  stroke-width: 2;
  vector-effect: non-scaling-stroke;
}
.series.previous {
  stroke-width: 1;
  stroke-dasharray: 3 3;
}
.days {
  display: flex;
  justify-content: space-between;
  line-height: 12px;
}
.days span {
  display: flex;
  justify-content: center;
  width: 0;
  height: 24px;
}
.days span:first-child {
  display: block;
}
.days span:last-child {
  justify-content: flex-end;
}
.y-axis {
  flex: 0 0 31px;
  height: 176px;
  border-bottom: 1px solid #e0e0e0;
  text-align: right;
  line-height: 14px;
}
.y-axis div {
  display: flex;
  flex-direction: column;
  justify-content: space-between;
  height: 44px;
  padding-bottom: 1px;
  border-top: 1px solid #e0e0e0;
}
.legend {
  display: flex;
  align-items: center;
  line-height: 16px;
  color: #202124;
}
.legend-line {
  margin: 13px 0 0 5px;
}
.key-solid {
  width: 13px;
  height: 3px;
  margin-right: 4px;
  background: #1a73e8;
}
.key-dash {
  width: 17px;
  height: 4px;
  margin: 0 5px 0 8px;
  background: linear-gradient(90deg, #1a73e8 6px, transparent 6px 11px, #1a73e8 11px);
}

/* Realtime */
.caps {
  font-size: 11px;
  font-weight: 500;
  letter-spacing: 1px;
  line-height: 20px;
  color: #5f6368;
}
.caps.first {
  margin-top: 24px;
}
.caps.second {
  margin-top: 6px;
}
.big-number {
  font-size: 38px;
  line-height: 46px;
  color: #202124;
}
.spark {
  display: flex;
  gap: 1px;
  margin: 49px 3px 11px 4px;
}
.spark i {
  flex: 1;
  height: 1px;
  background: #1a73e8;
}
.caps-table {
  width: 100%;
  border-collapse: separate;
  border-spacing: 0;
}
.caps-table th {
  height: 26px;
  padding: 0 0 5px;
  border-bottom: 1px solid #dadce0;
  font-weight: 500;
  letter-spacing: 1px;
  line-height: 20px;
  text-align: left;
  color: #5f6368;
}
.caps-table th.end,
.data th.end {
  text-align: right;
}

/* Insights */
.insights-title {
  display: flex;
  align-items: center;
  gap: 8px;
  margin-top: 24px;
  font-family: var(--sans);
  font-size: 14px;
  line-height: 20px;
}
.insights-title svg,
.insight-head svg {
  color: #5f6368;
}
.count {
  width: 15px;
  border-radius: 8px;
  background: #1a73e8;
  font-size: 12px;
  line-height: 18px;
  text-align: center;
  color: #fff;
}
.insights {
  display: flex;
  gap: 6px;
  height: 272px;
  margin-top: 16px;
  overflow: hidden;
}
.insights ul {
  flex: 1;
  list-style: none;
}
.insights li {
  height: 119px;
  padding-top: 16px;
  border-bottom: 1px solid #dadce0;
}
.insight-head {
  display: flex;
  align-items: center;
  gap: 8px;
  height: 20px;
  margin-bottom: 12px;
  font-weight: 500;
  color: #5f6368;
}
.insight-head b {
  align-self: flex-start;
  margin-left: auto;
  padding: 0 4px;
  border-radius: 8px;
  background: #1a73e8;
  font-weight: 400;
  line-height: 16px;
  color: #fff;
}
.insight-title {
  display: block;
  width: 270px;
  margin-bottom: 3px;
  font-size: 14px;
  font-weight: 500;
  line-height: 18px;
  color: #202124;
}
.insights p {
  line-height: 16px;
  color: #202124;
}
.thumb {
  width: 9px;
  height: 63px;
  margin: 1px 1px 0 0;
  border: 1px solid #b8b8b8;
  background: #c8c8c8;
}

/* Bottom cards */
.card-title {
  display: flex;
  align-items: center;
  height: 27px;
  margin: 21px 0 17px;
  font-family: var(--sans);
  font-size: 14px;
  font-weight: 500;
  white-space: nowrap;
}
.card-title .picker {
  gap: 5px;
}
.card-title .picker svg {
  color: #757575;
}
.card-title > * {
  height: 24px;
  margin-bottom: 3px;
  line-height: 24px;
}
.card-title .next {
  margin-left: 5px;
}
.card-title .dotted {
  height: 27px;
  margin-bottom: 0;
  border-bottom: 1px dashed #5f6368;
}
.bar-chart {
  position: relative;
  display: flex;
  flex-direction: column;
  gap: 7px;
  height: 228px;
  margin-top: 4px;
  padding: 30px 15px 0 100px;
}
.bar-grid {
  position: absolute;
  inset: 0 15px 0 100px;
}
.bar-grid span {
  position: absolute;
  top: 0;
  bottom: 0;
  display: flex;
  justify-content: center;
  align-items: flex-end;
  width: 1px;
  background: #e0e0e0;
}
.bar-grid em {
  flex: none;
  height: 0;
  font-style: normal;
  line-height: 16px;
  color: #5f6368;
}
.bar-row {
  position: relative;
  display: flex;
  align-items: center;
  margin-left: -100px;
}
.bar-label {
  flex: 0 0 100px;
  display: flex;
  align-items: center;
  justify-content: flex-end;
  gap: 3px;
  padding-top: 2px;
  font-size: 13px;
  font-weight: 500;
}
.bar-label::after {
  content: '';
  width: 6px;
  height: 1px;
  background: #dadce0;
}
.bars {
  flex: 1;
  display: grid;
  gap: 3px;
}
.bars i {
  height: 24px;
  background: #1a73e8;
}
.bars .before,
.key-dot.before {
  background: #8ab4f8;
}
.legend-dots {
  margin-top: 33px;
}
.key-dot {
  width: 10px;
  height: 10px;
  margin-right: 5px;
  border-radius: 5px;
  background: #1a73e8;
}
.key-dot.before {
  margin-left: 10px;
}

.data {
  width: 100%;
  border-collapse: separate;
  border-spacing: 0;
}
.data th {
  height: 30px;
  padding: 0 0 2px;
  border-bottom: 1px solid #dadce0;
  font-weight: 500;
  letter-spacing: 1px;
  text-align: left;
  color: #5f6368;
}
.data tbody tr {
  position: relative;
}
.data td {
  height: 32px;
  padding: 2px 0 0;
  border-bottom: 1px solid #e8eaed;
  white-space: nowrap;
}
.data tbody tr:last-child td {
  border-bottom-color: transparent;
}
.data .name {
  font-size: 13px;
  font-weight: 500;
}
.data .value {
  font-size: 13px;
  text-align: right;
}
.data .change {
  width: 64px;
  padding-top: 0;
  text-align: right;
}
.data .change svg {
  display: inline-block;
  margin-right: 3px;
  vertical-align: -1px;
}
.share {
  position: absolute;
  left: 0;
  bottom: 1px;
  min-width: 1px;
  height: 2px;
  background: #1a73e8;
}
.geo {
  display: flex;
}
.map {
  flex: 1;
  min-width: 0;
  height: 200px;
  margin-top: 43px;
}
.geo .data {
  flex: 0 0 230px;
  width: 230px;
}
.geo .data .change {
  width: 58px;
}
.geo .data .change.none {
  padding-right: 24px;
}
.land {
  fill: #dcdcdc;
}
.borders {
  fill: none;
  stroke: #fff;
  stroke-width: 2;
}

/* Floating parts */
.page-thumb {
  position: fixed;
  top: 170px;
  right: 0;
  width: 6px;
  height: 406px;
  border-radius: 3px;
  background: #c1c1c1;
}
.fab {
  position: fixed;
  right: 12px;
  bottom: 46px;
  display: grid;
  place-items: center;
  width: 40px;
  height: 40px;
  border-radius: 20px;
  background: #fff;
  box-shadow: 0 2px 6px rgba(60, 64, 67, 0.4);
  color: #202124;
}
</style>
